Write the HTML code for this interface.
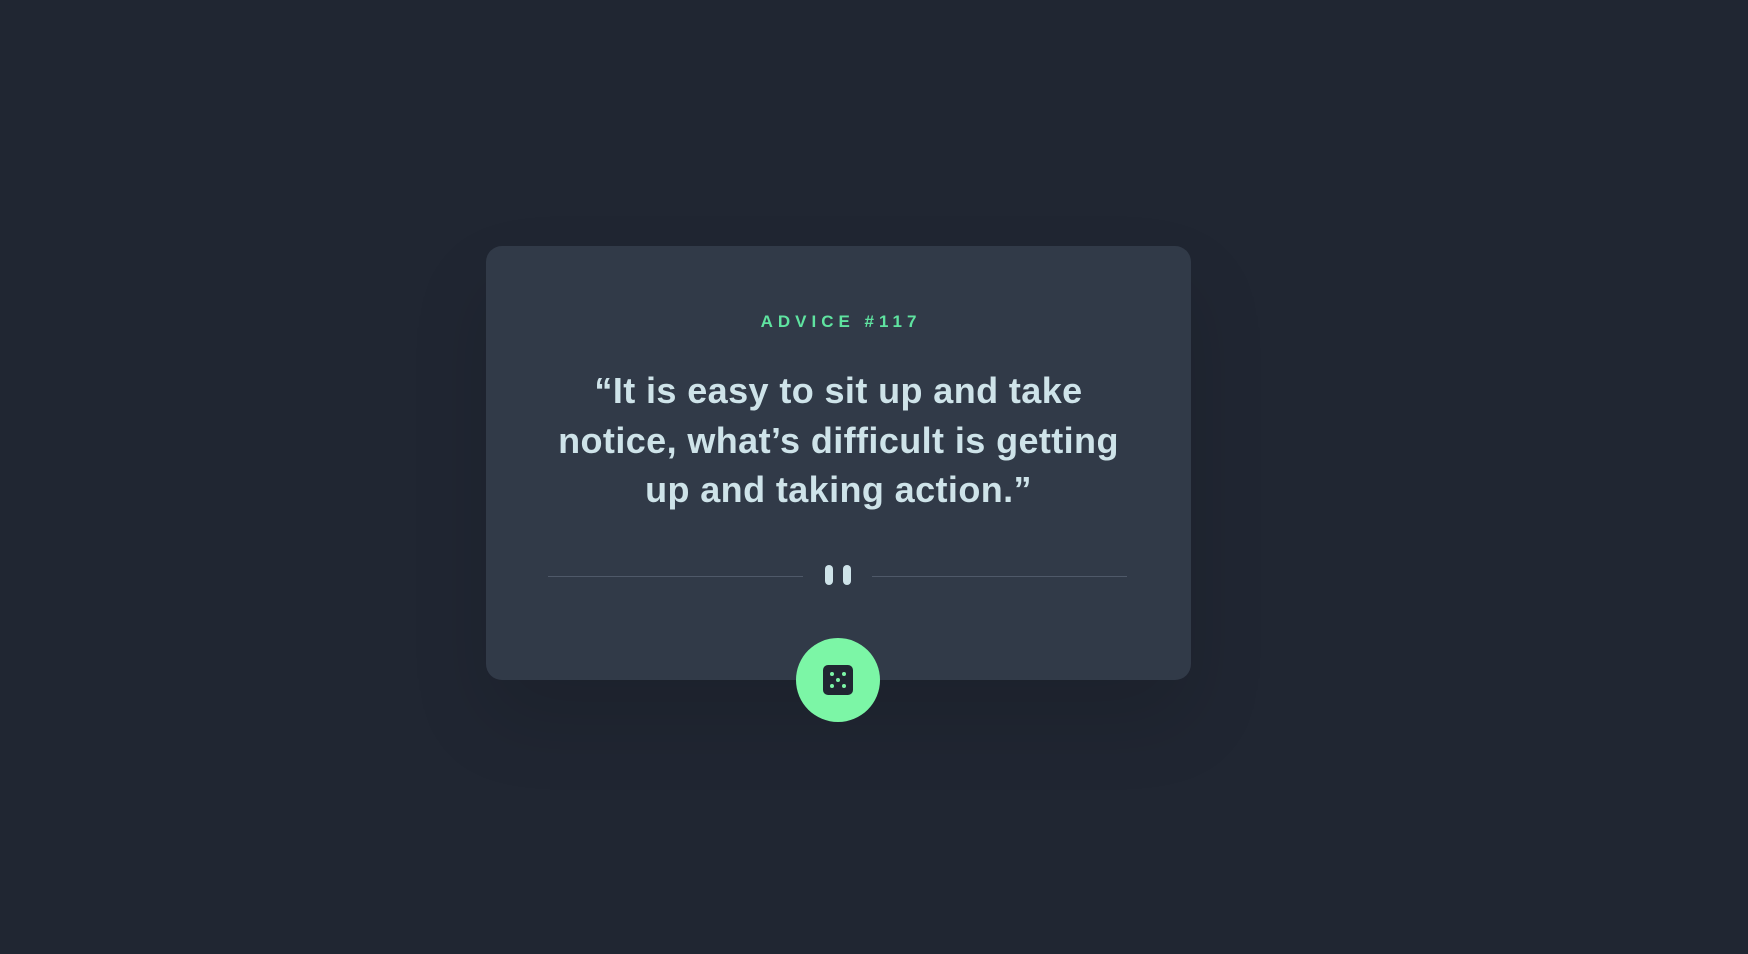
<!DOCTYPE html>
<html><head><meta charset="utf-8"><style>
html,body{margin:0;padding:0}
body{width:1748px;height:954px;background:#202632;position:relative;overflow:hidden;font-family:"Liberation Sans",sans-serif}
.card{position:absolute;left:486px;top:246px;width:705px;height:434px;background:#313a48;border-radius:16px;box-shadow:0 40px 80px rgba(0,0,0,0.12)}
.label{position:absolute;left:486px;width:705px;top:312px;text-align:center;color:#5fe3a0;font-weight:bold;font-size:17px;letter-spacing:5px;line-height:20px;padding-left:5px;box-sizing:border-box}
.quote{position:absolute;left:486px;width:705px;top:366px;text-align:center;color:#cee3e9;font-weight:bold;font-size:36px;line-height:49.5px;letter-spacing:0.4px}
.line{position:absolute;top:576px;height:1px;background:#4f5969}
.bar{position:absolute;top:565px;width:8px;height:20px;border-radius:4px;background:#cee3e9}
.btn{position:absolute;left:796px;top:638px;width:84px;height:84px;border-radius:50%;background:#7cf6a6}
.die{position:absolute;left:823px;top:665px;width:30px;height:30px;border-radius:5px;background:#202632}
.dot{position:absolute;width:4px;height:4px;border-radius:50%;background:#7cf6a6}
</style></head><body>
<div class="card"></div>
<div class="label">ADVICE #117</div>
<div class="quote">“It is easy to sit up and take<br>notice, what’s difficult is getting<br>up and taking action.”</div>
<div class="line" style="left:548px;width:255px"></div>
<div class="line" style="left:872px;width:255px"></div>
<div class="bar" style="left:825px"></div>
<div class="bar" style="left:843px"></div>
<div class="btn"></div>
<div class="die">
<div class="dot" style="left:7px;top:7px"></div>
<div class="dot" style="left:19px;top:7px"></div>
<div class="dot" style="left:13px;top:13px"></div>
<div class="dot" style="left:7px;top:19px"></div>
<div class="dot" style="left:19px;top:19px"></div>
</div>
</body></html>
